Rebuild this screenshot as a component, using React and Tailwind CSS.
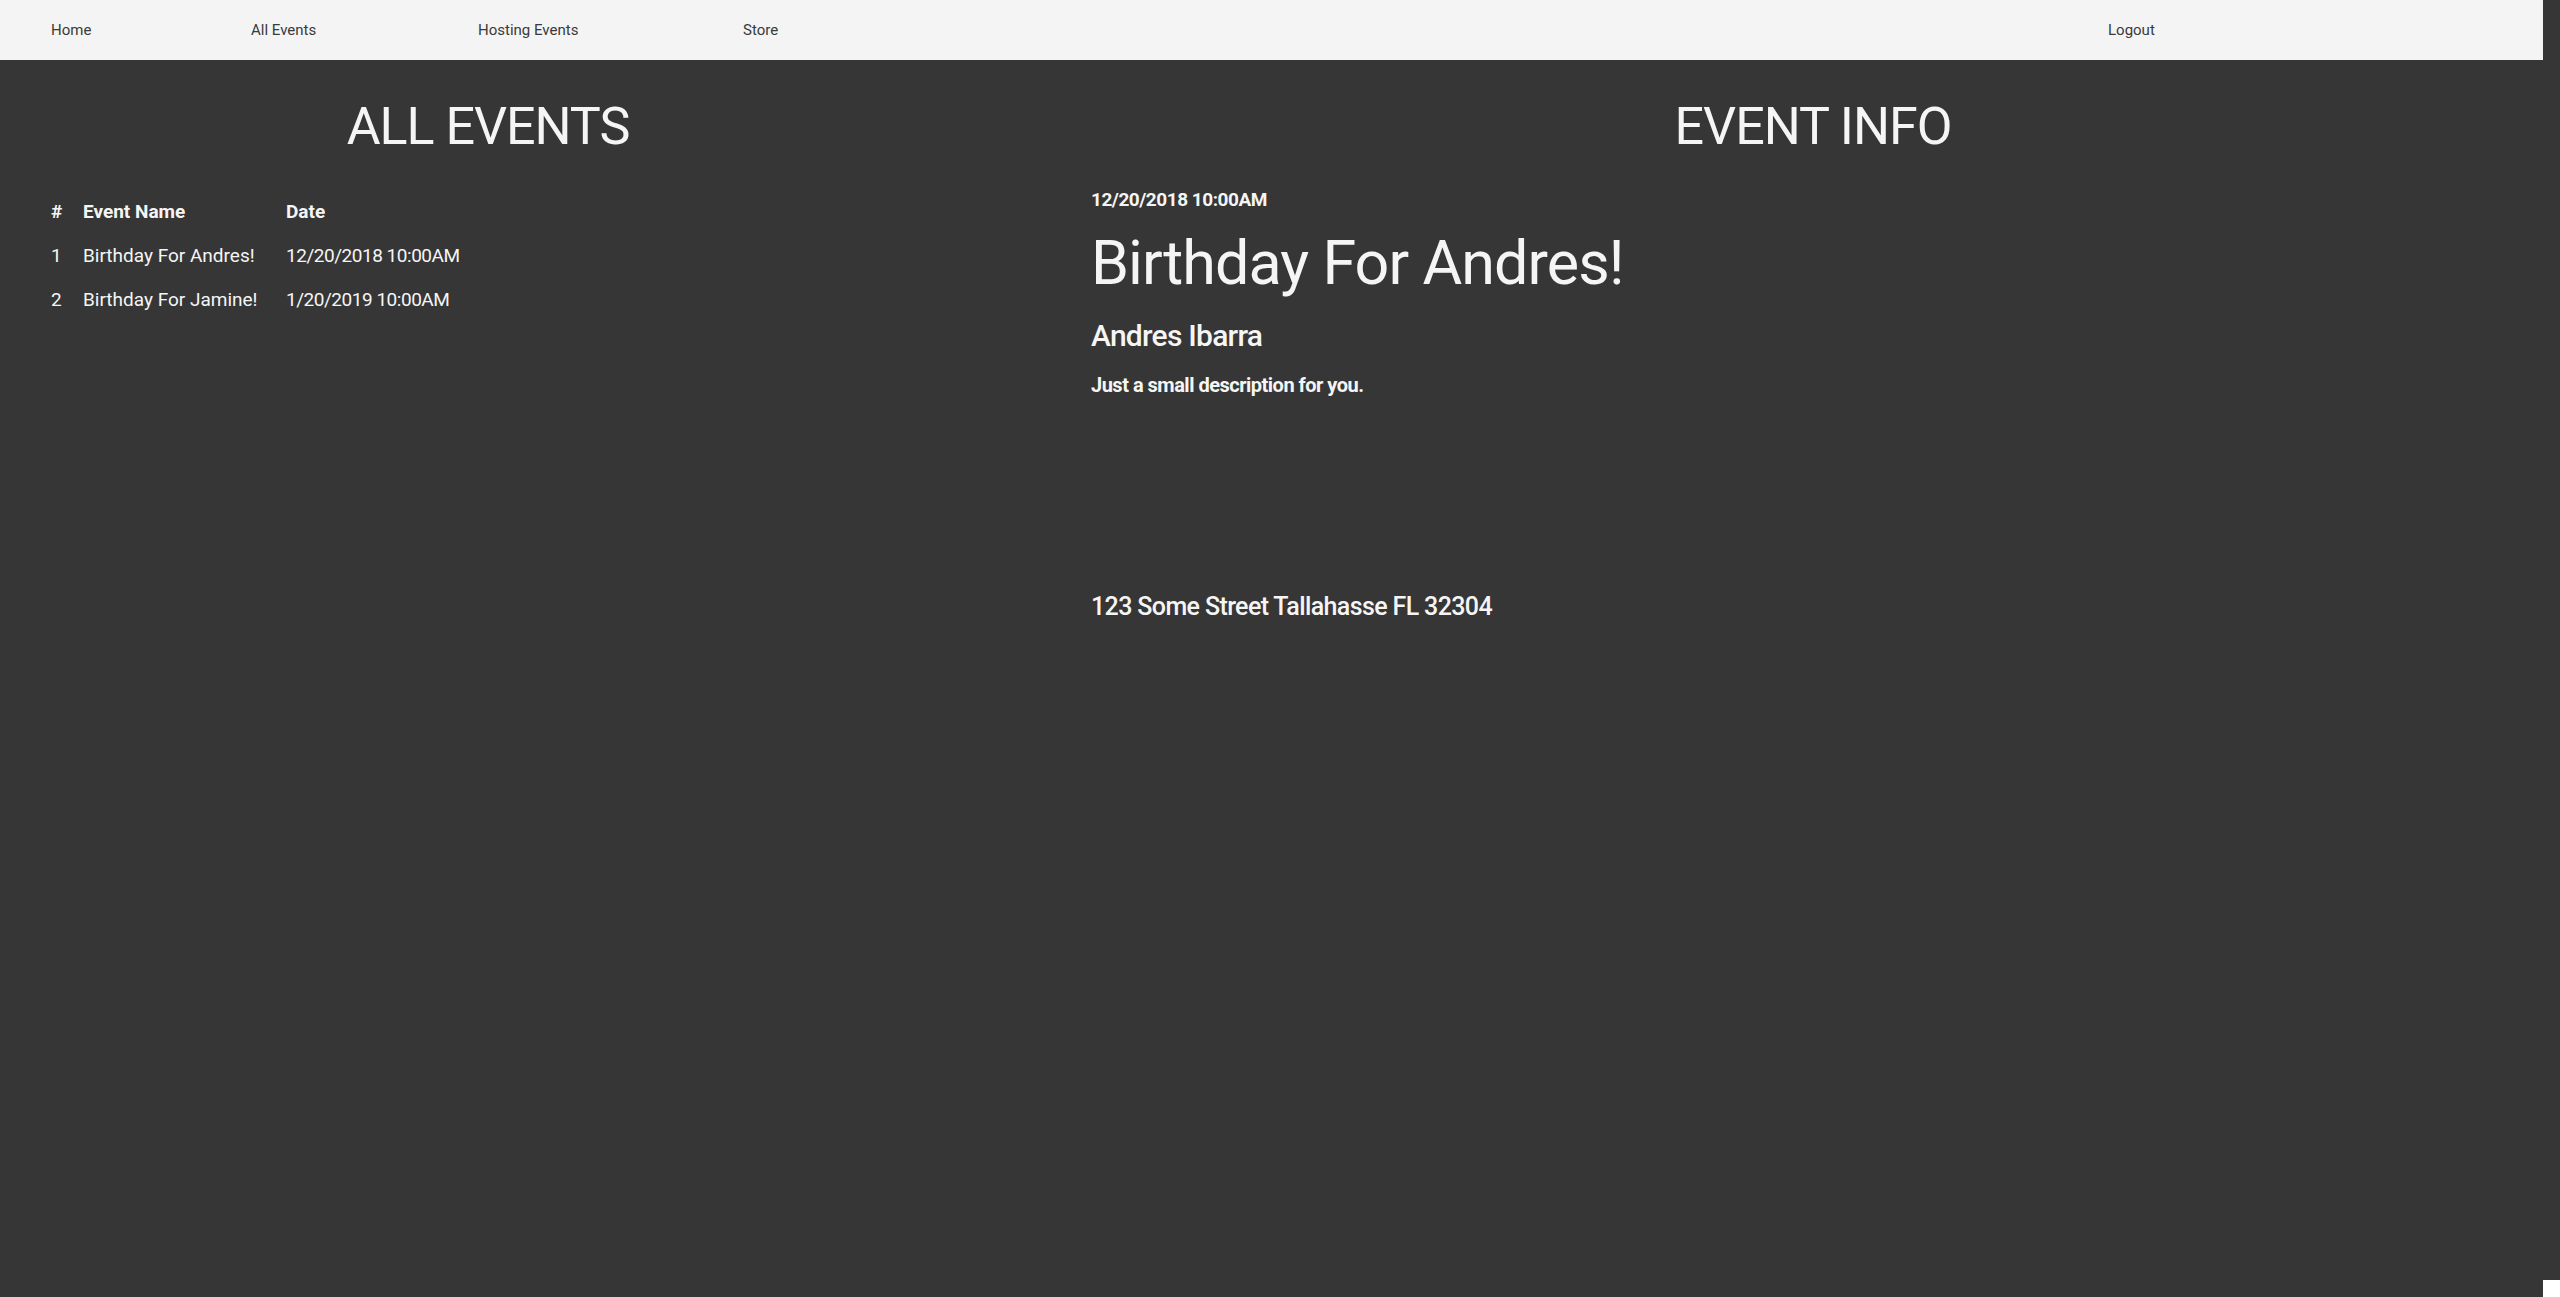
import React from "react";

const events = [
  { id: 1, name: "Birthday For Andres!", date: "12/20/2018 10:00AM" },
  { id: 2, name: "Birthday For Jamine!", date: "1/20/2019 10:00AM" },
];

const NavBar = () => (
  <nav className="w-[2543px] h-[60px] bg-[#f4f4f4] flex items-center pl-[51px] text-[15px] text-[#3a3a3a]">
    <a className="w-[200px]">Home</a>
    <a className="w-[227px]">All Events</a>
    <a className="w-[265px]">Hosting Events</a>
    <a className="w-[1365px]">Store</a>
    <a>Logout</a>
  </nav>
);

const EventTable = () => (
  <div className="mt-[37px] pl-[51px] text-[19px]">
    <div className="flex h-[44px] items-center font-bold">
      <span className="w-[32px]">#</span>
      <span className="w-[203px]">Event Name</span>
      <span>Date</span>
    </div>
    {events.map((ev) => (
      <div key={ev.id} className="flex h-[44px] items-center">
        <span className="w-[32px]">{ev.id}</span>
        <span className="w-[203px]">{ev.name}</span>
        <span className="tracking-tight">{ev.date}</span>
      </div>
    ))}
  </div>
);

const EventInfo = ({ event }) => (
  <div className="pl-[8px]">
    <p className="mt-[33px] h-[28px] leading-[28px] text-[19px] font-bold tracking-tight">
      {event.date}
    </p>
    <h2 className="mt-[19px] text-[61px] leading-none tracking-[-0.015em]">{event.name}</h2>
    <h3 className="mt-[27px] text-[30px] leading-none font-medium tracking-tight">
      Andres Ibarra
    </h3>
    <p className="mt-[24px] text-[20px] leading-none font-bold tracking-tight">
      Just a small description for you.
    </p>
    <p className="mt-[199px] text-[25px] leading-none font-medium tracking-tight">
      123 Some Street Tallahasse FL 32304
    </p>
  </div>
);

export default function App() {
  return (
    <div className="min-h-screen w-full bg-[#363636] text-[#f5f5f5] font-['Roboto',sans-serif]">
      <NavBar />
      <main className="flex">
        <section className="w-[976px]">
          <h1 className="mt-[41px] text-center text-[52px] leading-none tracking-[-0.02em]">
            ALL EVENTS
          </h1>
          <EventTable />
        </section>
        <section className="flex-1 pl-[107px] pr-[17px]">
          <h1 className="mt-[41px] text-center text-[52px] leading-none tracking-[-0.02em]">
            EVENT INFO
          </h1>
          <EventInfo event={events[0]} />
        </section>
      </main>
      <div className="fixed bottom-0 right-0 w-[17px] h-[17px] bg-white" />
    </div>
  );
}
